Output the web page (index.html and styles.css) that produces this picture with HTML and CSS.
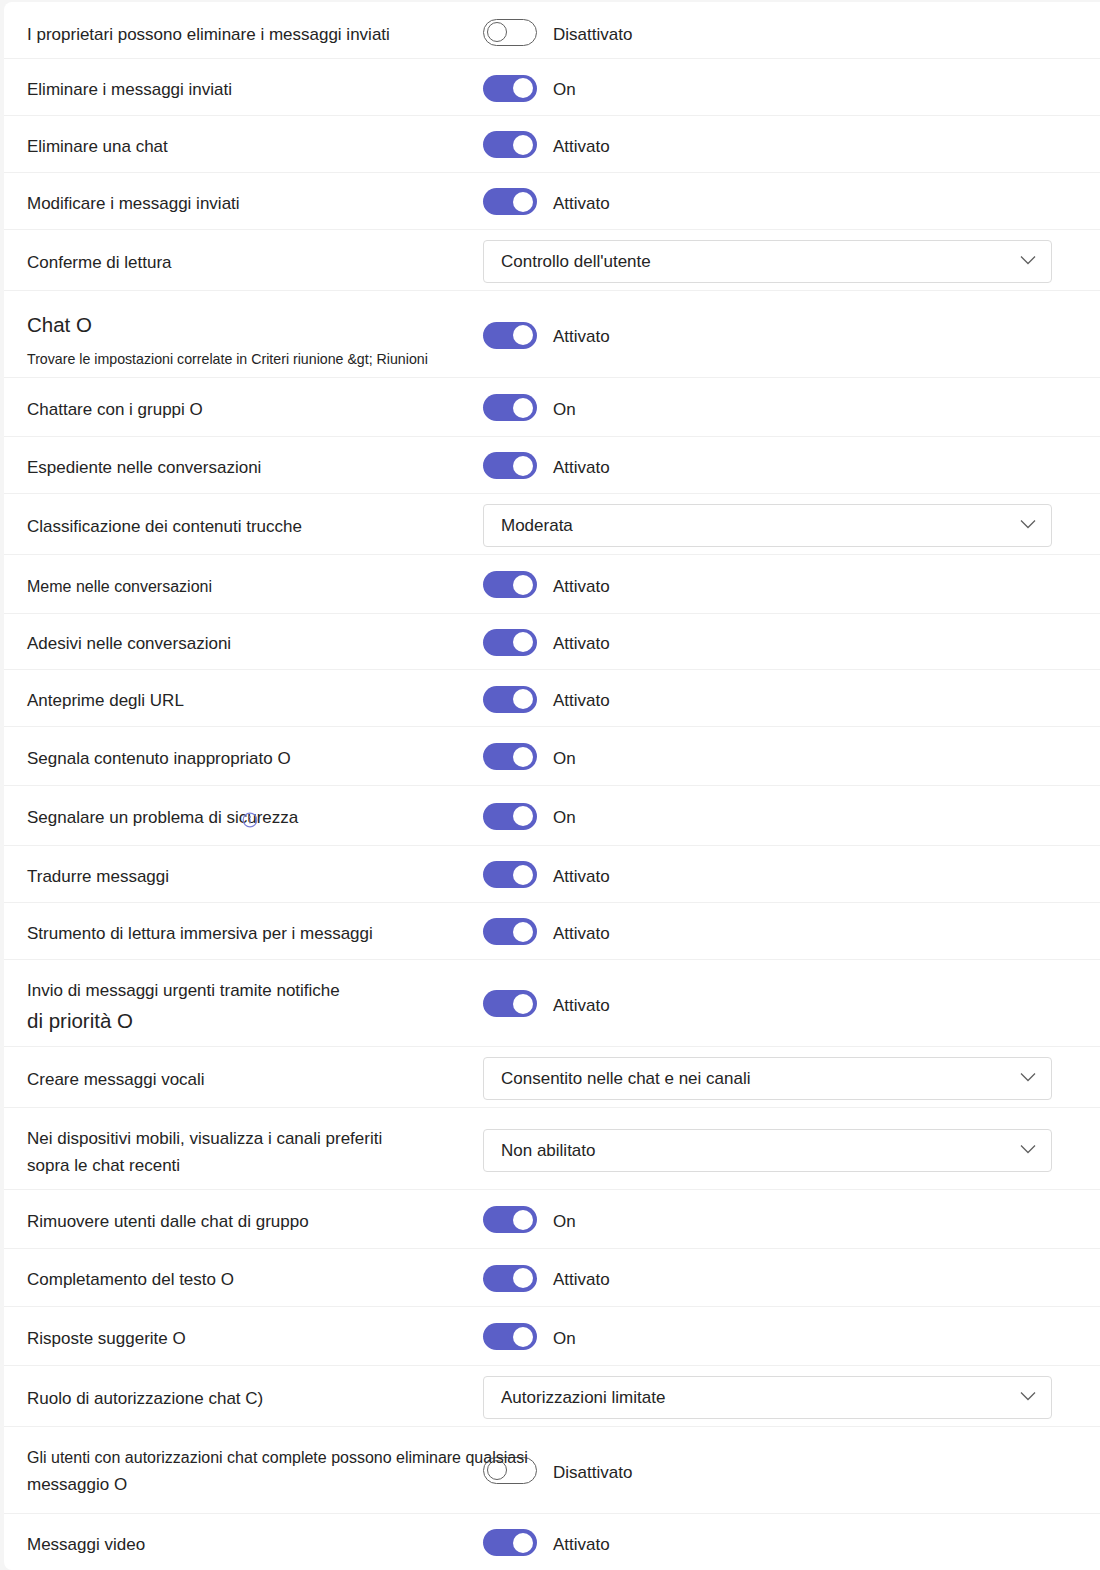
FILE: index.html
```html
<!DOCTYPE html>
<html lang="it">
<head>
<meta charset="utf-8">
<title>Criteri di messaggistica</title>
<link rel="stylesheet" href="styles.css">
</head>
<body>
<main class="card">
  <div class="row row--first">
    <div class="label">I proprietari possono eliminare i messaggi inviati</div>
    <div class="control"><span class="toggle toggle--off"></span><span class="state">Disattivato</span></div>
  </div>
  <div class="row">
    <div class="label">Eliminare i messaggi inviati</div>
    <div class="control"><span class="toggle"></span><span class="state">On</span></div>
  </div>
  <div class="row row--short">
    <div class="label">Eliminare una chat</div>
    <div class="control"><span class="toggle"></span><span class="state">Attivato</span></div>
  </div>
  <div class="row">
    <div class="label">Modificare i messaggi inviati</div>
    <div class="control"><span class="toggle"></span><span class="state">Attivato</span></div>
  </div>
  <div class="row row--select">
    <div class="label">Conferme di lettura</div>
    <div class="control"><div class="select"><span>Controllo dell'utente</span><svg class="chev" viewBox="0 0 16 10" width="16" height="10"><path d="M1 1.5 L8 8.5 L15 1.5" fill="none" stroke="#616161" stroke-width="1.3"/></svg></div></div>
  </div>
  <div class="row row--section">
    <div class="label label--section">
      <div class="title">Chat O</div>
      <div class="subtitle">Trovare le impostazioni correlate in Criteri riunione &amp;gt; Riunioni</div>
    </div>
    <div class="control"><span class="toggle"></span><span class="state">Attivato</span></div>
  </div>
  <div class="row row--roomy">
    <div class="label">Chattare con i gruppi O</div>
    <div class="control"><span class="toggle"></span><span class="state">On</span></div>
  </div>
  <div class="row">
    <div class="label">Espediente nelle conversazioni</div>
    <div class="control"><span class="toggle"></span><span class="state">Attivato</span></div>
  </div>
  <div class="row row--select">
    <div class="label">Classificazione dei contenuti trucche</div>
    <div class="control"><div class="select"><span>Moderata</span><svg class="chev" viewBox="0 0 16 10" width="16" height="10"><path d="M1 1.5 L8 8.5 L15 1.5" fill="none" stroke="#616161" stroke-width="1.3"/></svg></div></div>
  </div>
  <div class="row row--roomy">
    <div class="label label--narrow">Meme nelle conversazioni</div>
    <div class="control"><span class="toggle"></span><span class="state">Attivato</span></div>
  </div>
  <div class="row row--short">
    <div class="label">Adesivi nelle conversazioni</div>
    <div class="control"><span class="toggle"></span><span class="state">Attivato</span></div>
  </div>
  <div class="row">
    <div class="label">Anteprime degli URL</div>
    <div class="control"><span class="toggle"></span><span class="state">Attivato</span></div>
  </div>
  <div class="row row--roomy">
    <div class="label">Segnala contenuto inappropriato O</div>
    <div class="control"><span class="toggle"></span><span class="state">On</span></div>
  </div>
  <div class="row row--wide">
    <div class="label label--icon">Segnalare un problema di sicurezza<svg class="info" viewBox="0 0 16 16" width="16" height="16"><circle cx="8" cy="8" r="6.8" fill="none" stroke="#7a7fd8" stroke-width="1.2"/><circle cx="8" cy="5" r="0.9" fill="#7a7fd8"/><path d="M8 7.2 V11.5" stroke="#7a7fd8" stroke-width="1.2"/></svg></div>
    <div class="control"><span class="toggle"></span><span class="state">On</span></div>
  </div>
  <div class="row">
    <div class="label">Tradurre messaggi</div>
    <div class="control"><span class="toggle"></span><span class="state">Attivato</span></div>
  </div>
  <div class="row">
    <div class="label">Strumento di lettura immersiva per i messaggi</div>
    <div class="control"><span class="toggle"></span><span class="state">Attivato</span></div>
  </div>
  <div class="row row--section">
    <div class="label label--mixed">
      <div>Invio di messaggi urgenti tramite notifiche</div>
      <div class="big">di priorità O</div>
    </div>
    <div class="control"><span class="toggle"></span><span class="state">Attivato</span></div>
  </div>
  <div class="row row--select">
    <div class="label">Creare messaggi vocali</div>
    <div class="control"><div class="select"><span>Consentito nelle chat e nei canali</span><svg class="chev" viewBox="0 0 16 10" width="16" height="10"><path d="M1 1.5 L8 8.5 L15 1.5" fill="none" stroke="#616161" stroke-width="1.3"/></svg></div></div>
  </div>
  <div class="row row--two">
    <div class="label label--multi">Nei dispositivi mobili, visualizza i canali preferiti<br>sopra le chat recenti</div>
    <div class="control"><div class="select"><span>Non abilitato</span><svg class="chev" viewBox="0 0 16 10" width="16" height="10"><path d="M1 1.5 L8 8.5 L15 1.5" fill="none" stroke="#616161" stroke-width="1.3"/></svg></div></div>
  </div>
  <div class="row row--roomy">
    <div class="label">Rimuovere utenti dalle chat di gruppo</div>
    <div class="control"><span class="toggle"></span><span class="state">On</span></div>
  </div>
  <div class="row row--roomy">
    <div class="label">Completamento del testo O</div>
    <div class="control"><span class="toggle"></span><span class="state">Attivato</span></div>
  </div>
  <div class="row row--roomy">
    <div class="label">Risposte suggerite O</div>
    <div class="control"><span class="toggle"></span><span class="state">On</span></div>
  </div>
  <div class="row row--select">
    <div class="label">Ruolo di autorizzazione chat C)</div>
    <div class="control"><div class="select"><span>Autorizzazioni limitate</span><svg class="chev" viewBox="0 0 16 10" width="16" height="10"><path d="M1 1.5 L8 8.5 L15 1.5" fill="none" stroke="#616161" stroke-width="1.3"/></svg></div></div>
  </div>
  <div class="row row--tall">
    <div class="label label--multi label--over"><span class="narrow">Gli utenti con autorizzazioni chat complete possono eliminare qualsiasi</span><br>messaggio O</div>
    <div class="control"><span class="toggle toggle--off"></span><span class="state">Disattivato</span></div>
  </div>
  <div class="row row--last">
    <div class="label">Messaggi video</div>
    <div class="control"><span class="toggle"></span><span class="state">Attivato</span></div>
  </div>
</main>
</body>
</html>
```

FILE: styles.css
```css
html, body {
  margin: 0;
  padding: 0;
  overflow: hidden;
}

body {
  background: #f5f5f5;
  font-family: "Liberation Sans", Arial, sans-serif;
  color: #242424;
  padding: 2px 0 0 4px;
}

.card {
  background: #ffffff;
  border-radius: 8px;
  margin-right: -8px;
}

.row {
  display: grid;
  grid-template-columns: 456px 1fr;
  align-items: center;
  padding-left: 23px;
  height: 57px;
  box-sizing: border-box;
  border-bottom: 1px solid #f0f0f0;
}

.row--short { height: 56.5px; }
.row--roomy { height: 58.5px; }
.row--wide { height: 60px; }
.row--select { height: 61.5px; }
.row--section { height: 87px; }
.row--tall { height: 86.5px; }
.row--two { height: 82px; }
.row--last { height: 56px; border-bottom: none; }

.label {
  font-size: 17px;
  line-height: 24px;
  padding-top: 6px;
  white-space: nowrap;
}

.row--first .label,
.row--first .state {
  padding-top: 10px;
}

.row--first .toggle {
  margin-top: 4px;
}

.label--narrow {
  font-size: 16px;
}

.label--section {
  align-self: start;
  padding-top: 20px;
}

.title {
  font-size: 20.5px;
  line-height: 28px;
}

.subtitle {
  font-size: 14.2px;
  line-height: 20px;
  margin-top: 10px;
}

.label--mixed {
  padding-top: 9px;
}

.label--mixed .big {
  font-size: 20.5px;
  line-height: 28px;
  margin-top: 4px;
}

.label--multi {
  line-height: 27px;
  padding-top: 6px;
}

.label--over {
  position: relative;
  z-index: 1;
  padding-top: 2px;
}

.narrow {
  font-size: 16px;
}

.label--icon {
  position: relative;
}

.info {
  position: absolute;
  left: 215px;
  top: 12px;
}

.control {
  display: flex;
  align-items: center;
  gap: 16px;
}

.toggle {
  position: relative;
  flex: none;
  width: 54px;
  height: 27px;
  margin-top: 2px;
  box-sizing: border-box;
  border-radius: 14px;
  background: #5b5fc7;
}

.toggle::after {
  content: "";
  position: absolute;
  top: 3.5px;
  right: 4px;
  width: 20px;
  height: 20px;
  border-radius: 50%;
  background: #ffffff;
}

.toggle--off {
  background: #ffffff;
  border: 1.5px solid #616161;
}

.toggle--off::after {
  top: 2px;
  left: 3px;
  right: auto;
  width: 20px;
  height: 20px;
  box-sizing: border-box;
  border: 1.5px solid #616161;
  background: #ffffff;
}

.state {
  font-size: 17px;
  line-height: 24px;
  padding-top: 6px;
}

.select {
  width: 569px;
  height: 43px;
  margin-top: 3px;
  box-sizing: border-box;
  border: 1px solid #dcdcdc;
  border-radius: 4px;
  display: flex;
  align-items: center;
  justify-content: space-between;
  padding: 2px 15px 0 17px;
  font-size: 17px;
  background: #ffffff;
}

.chev {
  flex: none;
  margin-top: -4px;
}
```
